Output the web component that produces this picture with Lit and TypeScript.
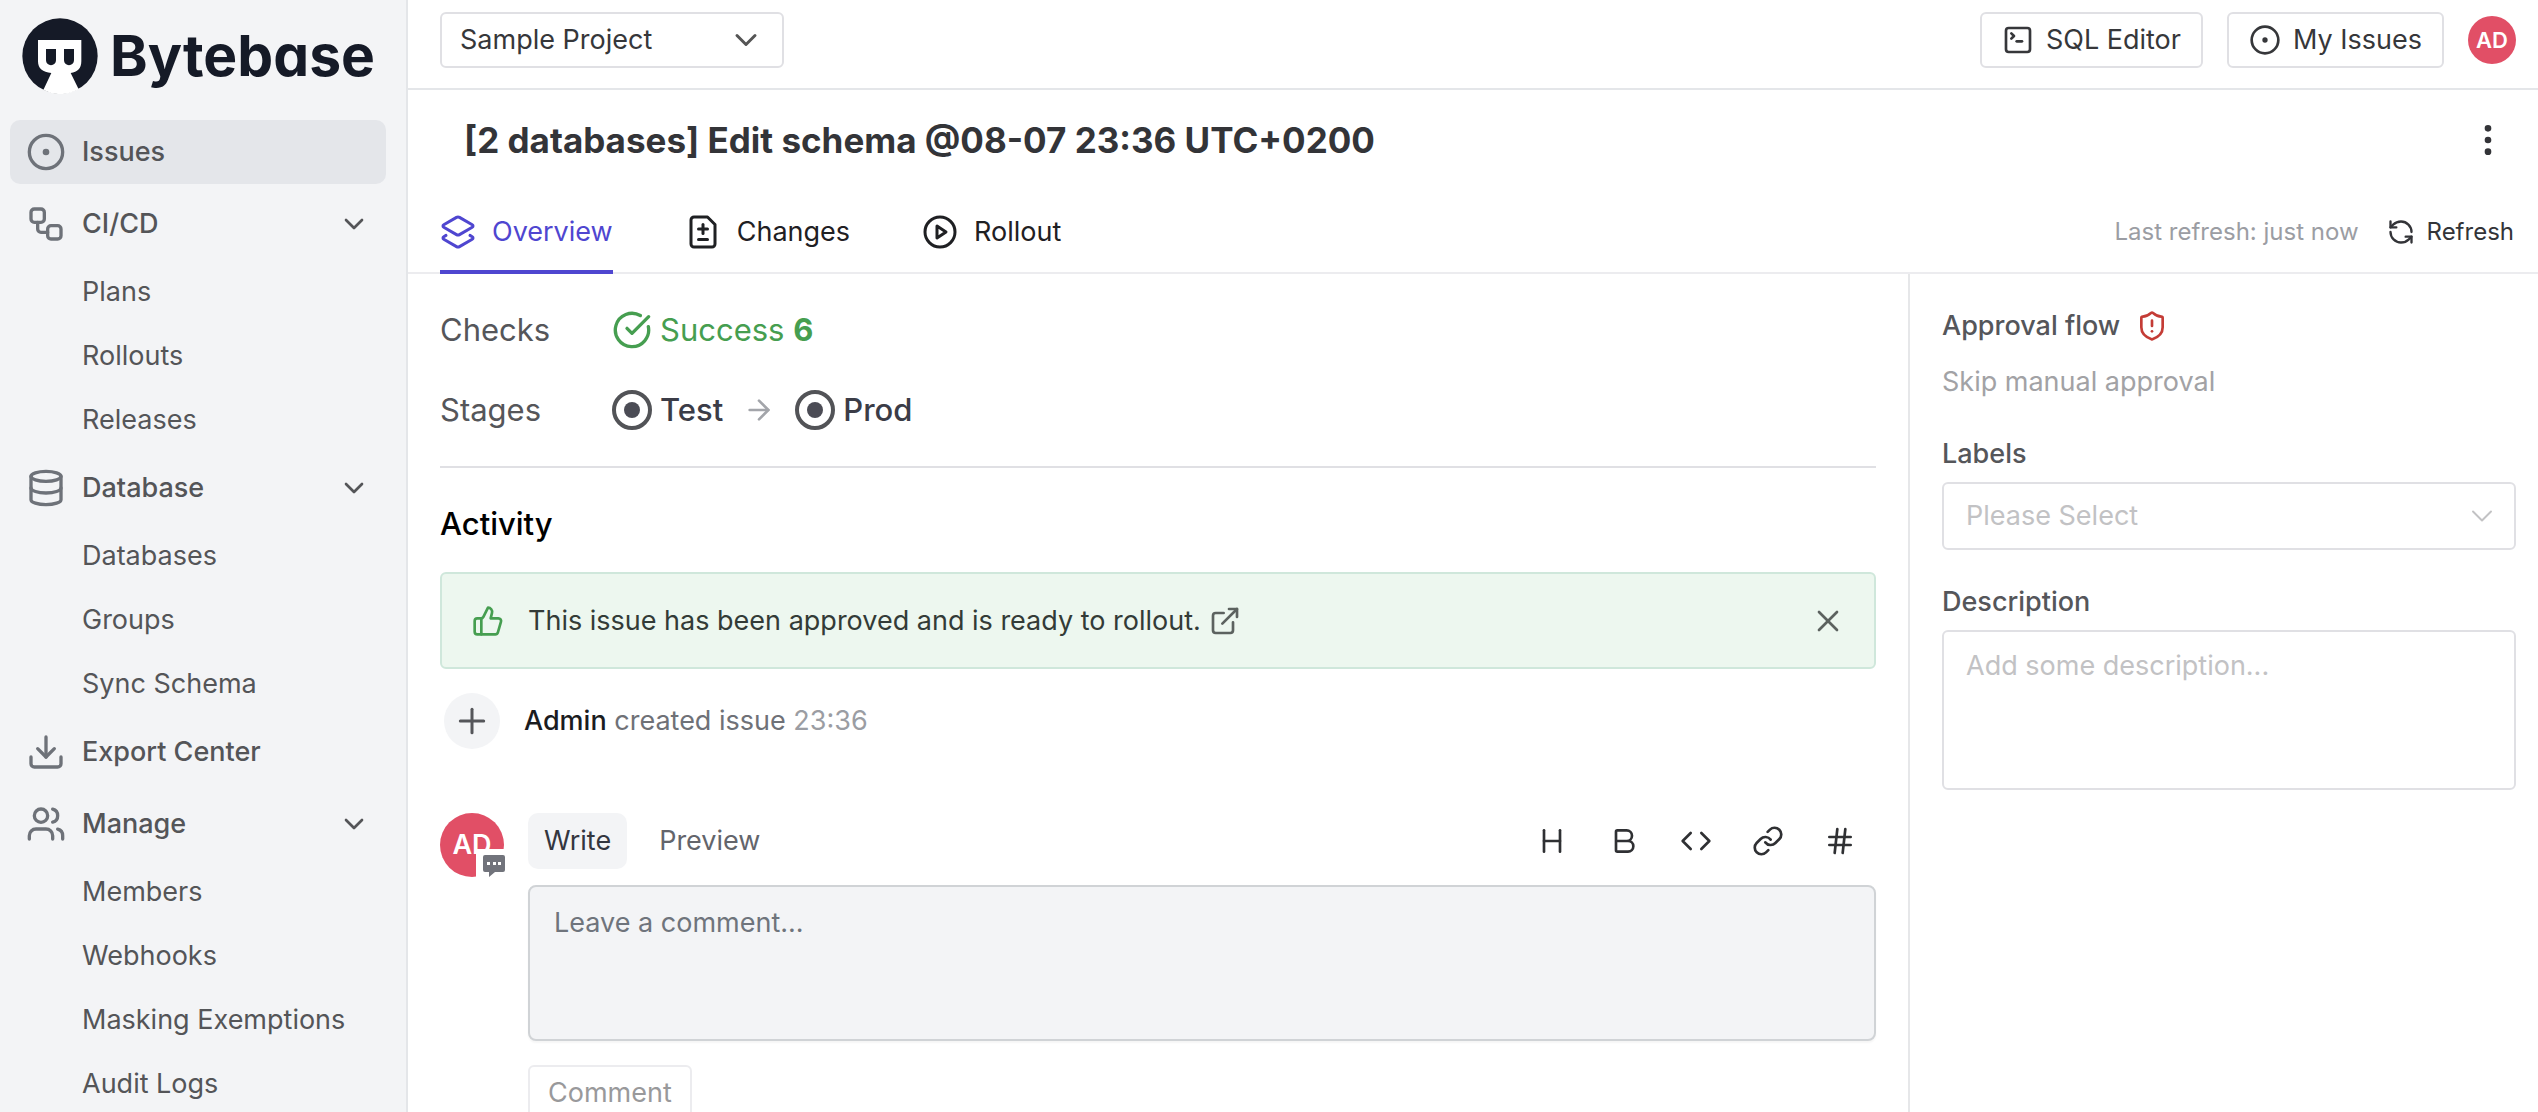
import { LitElement, html, svg, css, type TemplateResult } from "lit";
import { customElement, property } from "lit/decorators.js";
import { classMap } from "lit/directives/class-map.js";

/* 24-unit stroke icons, keyed by name */
const ICONS: Record<string, TemplateResult> = {
  issue: svg`<circle cx="12" cy="12" r="10"/><circle cx="12" cy="12" r="1"/>`,
  workflow: svg`<rect width="8" height="8" x="3" y="3" rx="2"/><path d="M7 11v4a2 2 0 0 0 2 2h4"/><rect width="8" height="8" x="13" y="13" rx="2"/>`,
  database: svg`<ellipse cx="12" cy="5" rx="9" ry="3"/><path d="M3 5v14a9 3 0 0 0 18 0V5"/><path d="M3 12a9 3 0 0 0 18 0"/>`,
  download: svg`<path d="M21 15v4a2 2 0 0 1-2 2H5a2 2 0 0 1-2-2v-4"/><path d="m7 10 5 5 5-5"/><path d="M12 15V3"/>`,
  users: svg`<path d="M16 21v-2a4 4 0 0 0-4-4H6a4 4 0 0 0-4 4v2"/><circle cx="9" cy="7" r="4"/><path d="M22 21v-2a4 4 0 0 0-3-3.87"/><path d="M16 3.13a4 4 0 0 1 0 7.75"/>`,
  chevron: svg`<path d="m6 9 6 6 6-6"/>`,
  terminal: svg`<rect width="18" height="18" x="3" y="3" rx="2"/><path d="m7 11 2-2-2-2"/><path d="M11 13h4"/>`,
  kebab: svg`<circle cx="12" cy="12" r="1"/><circle cx="12" cy="5" r="1"/><circle cx="12" cy="19" r="1"/>`,
  layers: svg`<path d="M13 13.74a2 2 0 0 1-2 0L2.5 8.87a1 1 0 0 1 0-1.74L11 2.26a2 2 0 0 1 2 0l8.5 4.87a1 1 0 0 1 0 1.74z"/><path d="m20 14.285 1.5.845a1 1 0 0 1 0 1.74L13 21.74a2 2 0 0 1-2 0l-8.5-4.87a1 1 0 0 1 0-1.74l1.5-.845"/>`,
  fileDiff: svg`<path d="M15 2H6a2 2 0 0 0-2 2v16a2 2 0 0 0 2 2h12a2 2 0 0 0 2-2V7Z"/><path d="M9 10h6"/><path d="M12 13V7"/><path d="M9 17h6"/>`,
  play: svg`<circle cx="12" cy="12" r="10"/><path d="m10 8 6 4-6 4z"/>`,
  refresh: svg`<path d="M21 12a9 9 0 0 0-9-9 9.75 9.75 0 0 0-6.74 2.74L3 8"/><path d="M3 3v5h5"/><path d="M3 12a9 9 0 0 0 9 9 9.75 9.75 0 0 0 6.74-2.74L21 16"/><path d="M16 16h5v5"/>`,
  checkCircle: svg`<path d="M21.801 10A10 10 0 1 1 17 3.335"/><path d="m9 11 3 3L22 4"/>`,
  arrow: svg`<path d="M5 12h14"/><path d="m12 5 7 7-7 7"/>`,
  thumb: svg`<path d="M7 10v12"/><path d="M15 5.88 14 10h5.83a2 2 0 0 1 1.92 2.56l-2.33 8A2 2 0 0 1 17.5 22H4a2 2 0 0 1-2-2v-8a2 2 0 0 1 2-2h2.76a2 2 0 0 0 1.79-1.11L12 2a3.13 3.13 0 0 1 3 3.88Z"/>`,
  external: svg`<path d="M15 3h6v6"/><path d="M10 14 21 3"/><path d="M18 13v6a2 2 0 0 1-2 2H5a2 2 0 0 1-2-2V8a2 2 0 0 1 2-2h6"/>`,
  close: svg`<path d="M18 6 6 18"/><path d="m6 6 12 12"/>`,
  plus: svg`<path d="M5 12h14"/><path d="M12 5v14"/>`,
  heading: svg`<path d="M6 12h12"/><path d="M6 20V4"/><path d="M18 20V4"/>`,
  bold: svg`<path d="M6 12h9a4 4 0 0 1 0 8H7a1 1 0 0 1-1-1V5a1 1 0 0 1 1-1h7a4 4 0 0 1 0 8"/>`,
  code: svg`<path d="m16 18 6-6-6-6"/><path d="m8 6-6 6 6 6"/>`,
  link: svg`<path d="M10 13a5 5 0 0 0 7.54.54l3-3a5 5 0 0 0-7.07-7.07l-1.72 1.71"/><path d="M14 11a5 5 0 0 0-7.54-.54l-3 3a5 5 0 0 0 7.07 7.07l1.71-1.71"/>`,
  hash: svg`<path d="M4 9h16"/><path d="M4 15h16"/><path d="M10 3 8 21"/><path d="M16 3l-2 18"/>`,
  shield: svg`<path d="M20 13c0 5-3.5 7.5-7.66 8.95a1 1 0 0 1-.67-.01C7.5 20.5 4 18 4 13V6a1 1 0 0 1 1-1c2 0 4.5-1.2 6.24-2.72a1.17 1.17 0 0 1 1.52 0C14.51 3.81 17 5 19 5a1 1 0 0 1 1 1z"/><path d="M12 8v4"/><path d="M12 16h.01"/>`,
};

const icon = (name: string, size = 32, weight = 2) => html`<svg
  class="icon"
  width=${size}
  height=${size}
  viewBox="0 0 24 24"
  fill="none"
  stroke="currentColor"
  stroke-width=${weight}
  stroke-linecap="round"
  stroke-linejoin="round"
  aria-hidden="true"
>${ICONS[name]}</svg>`;

const base = css`
  *,
  *::before,
  *::after {
    box-sizing: border-box;
  }
  :host {
    font-family: Inter, "Liberation Sans", sans-serif;
    font-size: 27px;
    line-height: 40px;
  }
  .icon {
    display: block;
    flex: none;
  }
  button,
  select,
  textarea {
    font: inherit;
    color: inherit;
    margin: 0;
  }
  button {
    display: flex;
    align-items: center;
    padding: 0;
    border: 0;
    background: none;
    cursor: pointer;
  }
  a {
    color: inherit;
    text-decoration: none;
  }
  h1,
  h2,
  p,
  ul {
    margin: 0;
    padding: 0;
  }
  textarea {
    display: block;
    width: 100%;
    resize: none;
    overflow: hidden;
  }
  .picker {
    display: grid;
    align-items: center;
  }
  .picker > * {
    grid-area: 1 / 1;
  }
  .picker select {
    appearance: none;
    width: 100%;
    background: #fff;
    border: 2px solid #e0e0e4;
    border-radius: 6px;
  }
  .picker .icon {
    justify-self: end;
    pointer-events: none;
  }
  .avatar {
    display: flex;
    align-items: center;
    justify-content: center;
    flex: none;
    border-radius: 50%;
    background: #e14f66;
    color: #fff;
    font-weight: 600;
  }
`;

interface NavEntry {
  label: string;
  icon: string;
  active?: boolean;
  children?: string[];
}

const NAV: NavEntry[] = [
  { label: "Issues", icon: "issue", active: true },
  { label: "CI/CD", icon: "workflow", children: ["Plans", "Rollouts", "Releases"] },
  { label: "Database", icon: "database", children: ["Databases", "Groups", "Sync Schema"] },
  { label: "Export Center", icon: "download" },
  { label: "Manage", icon: "users", children: ["Members", "Webhooks", "Masking Exemptions", "Audit Logs"] },
];

@customElement("side-nav")
class SideNav extends LitElement {
  static styles = [
    base,
    css`
      :host {
        display: block;
        padding: 0 20px 0 10px;
        background: #f3f4f6;
        border-right: 2px solid #e4e6e9;
        color: #545558;
        overflow: hidden;
      }
      .brand {
        display: flex;
        align-items: center;
        gap: 12px;
        height: 116px;
        padding: 0 0 4px 12px;
        color: #151a27;
      }
      .name {
        font-size: 57px;
        line-height: 64px;
        font-weight: 700;
        font-feature-settings: "cv11";
      }
      .item {
        display: flex;
        align-items: center;
        gap: 16px;
        width: 100%;
        height: 64px;
        margin: 4px 0;
        padding: 0 16px;
        border-radius: 10px;
        font-weight: 500;
        text-align: left;
      }
      .item > .icon:first-child {
        color: #6e7279;
      }
      .active {
        background: #e4e6ea;
      }
      .label {
        flex: 1;
      }
      nav,
      .list {
        display: flex;
        flex-direction: column;
        list-style: none;
      }
      .child {
        display: block;
        padding: 12px 0 12px 72px;
        white-space: nowrap;
      }
    `,
  ];

  private entry(e: NavEntry) {
    if (!e.children) {
      return html`<a
        href="#"
        class=${classMap({ item: true, active: !!e.active })}
        >${icon(e.icon, 40)}<span class="label">${e.label}</span></a
      >`;
    }
    return html`
      <button class="item" aria-expanded="true">
        ${icon(e.icon, 40)}<span class="label">${e.label}</span>${icon("chevron", 32)}
      </button>
      <ul class="list">
        ${e.children.map((c) => html`<li><a class="child" href="#">${c}</a></li>`)}
      </ul>
    `;
  }

  render() {
    return html`
      <a class="brand" href="#">
        <svg class="icon" width="76" height="76" viewBox="0 0 228 228" aria-hidden="true">
          <circle cx="114" cy="114" r="113" fill="#151a27" />
          <path
            fill="#fff"
            d="M48 66H178V130C178 152 166 163 146 165L170 214A113 113 0 0 1 64 216L88 165C62 163 48 152 48 130Z"
          />
          <path
            fill="#151a27"
            d="M72 93h30v34a15 15 0 0 1-30 0zM126 93h30v34a15 15 0 0 1-30 0z"
          />
        </svg>
        <span class="name">Bytebase</span>
      </a>
      <nav>${NAV.map((e) => this.entry(e))}</nav>
    `;
  }
}

@customElement("top-bar")
class TopBar extends LitElement {
  static styles = [
    base,
    css`
      :host {
        display: flex;
        align-items: center;
        gap: 24px;
        height: 90px;
        padding: 0 22px 8px 32px;
        border-bottom: 2px solid #e4e6e9;
        color: #36373a;
      }
      .picker {
        width: 344px;
        margin-right: auto;
      }
      .picker select {
        height: 56px;
        padding: 0 56px 0 18px;
      }
      .picker .icon {
        margin-right: 20px;
        color: #555;
      }
      .action {
        height: 56px;
        gap: 12px;
        padding: 0 20px;
        border: 2px solid #e0e0e4;
        border-radius: 6px;
      }
      .avatar {
        width: 48px;
        height: 48px;
        font-size: 22px;
      }
    `,
  ];

  render() {
    return html`
      <div class="picker">
        <select aria-label="Project">
          <option>Sample Project</option>
        </select>
        ${icon("chevron", 36)}
      </div>
      <button class="action">${icon("terminal")}SQL Editor</button>
      <button class="action">${icon("issue")}My Issues</button>
      <button class="avatar" aria-label="Account">AD</button>
    `;
  }
}

@customElement("issue-header")
class IssueHeader extends LitElement {
  static styles = [
    base,
    css`
      :host {
        display: block;
      }
      .title-row {
        display: flex;
        align-items: center;
        justify-content: space-between;
        padding: 28px 30px 28px 56px;
        color: #333438;
      }
      h1 {
        font-size: 35px;
        line-height: 44px;
        font-weight: 700;
      }
      .bar {
        display: flex;
        align-items: center;
        gap: 28px;
        padding: 0 24px 0 32px;
        box-shadow: inset 0 -2px #ececef;
        color: #1f2023;
      }
      .tabs {
        display: flex;
        gap: 72px;
        margin-right: auto;
      }
      .tab {
        display: flex;
        align-items: center;
        gap: 16px;
        padding: 22px 0 18px;
        border-bottom: 4px solid transparent;
      }
      .selected {
        color: #4f46d0;
        border-color: #4f46d0;
      }
      .small {
        font-size: 24px;
      }
      .muted {
        color: #9b9da3;
      }
      .refresh {
        gap: 12px;
        color: #333438;
      }
    `,
  ];

  render() {
    return html`
      <div class="title-row">
        <h1>[2 databases] Edit schema @08-07 23:36 UTC+0200</h1>
        <button aria-label="More actions">${icon("kebab", 40)}</button>
      </div>
      <div class="bar">
        <nav class="tabs">
          <a class="tab selected" href="#">${icon("layers", 36)}Overview</a>
          <a class="tab" href="#">${icon("fileDiff", 36)}Changes</a>
          <a class="tab" href="#">${icon("play", 36)}Rollout</a>
        </nav>
        <span class="small muted">Last refresh: just now</span>
        <button class="small refresh">${icon("refresh", 28)}Refresh</button>
      </div>
    `;
  }
}

@customElement("issue-stage")
class IssueStage extends LitElement {
  @property() name = "";

  static styles = [
    base,
    css`
      :host {
        display: flex;
        align-items: center;
        gap: 8px;
        font-size: 31px;
        font-weight: 500;
        color: #3b3c47;
      }
      .ring {
        display: grid;
        place-items: center;
        width: 40px;
        height: 40px;
        border: 4px solid #525357;
        border-radius: 50%;
      }
      .dot {
        width: 16px;
        height: 16px;
        border-radius: 50%;
        background: #4b4c55;
      }
    `,
  ];

  render() {
    return html`<span class="ring"><span class="dot"></span></span>${this.name}`;
  }
}

@customElement("issue-overview")
class IssueOverview extends LitElement {
  static styles = [
    base,
    css`
      :host {
        display: block;
        padding: 0 32px;
      }
      .summary {
        display: grid;
        grid-template-columns: 172px 1fr;
        row-gap: 40px;
        padding: 36px 0;
        border-bottom: 2px solid #e0e0e4;
        font-size: 31px;
        color: #55565a;
      }
      .value {
        display: flex;
        align-items: center;
        gap: 8px;
      }
      .stages {
        gap: 20px;
      }
      .success {
        color: #469e50;
      }
      .arrow {
        color: #a3a5aa;
      }
      h2 {
        padding: 32px 0 24px;
        font-size: 31px;
        line-height: 48px;
        font-weight: 500;
        color: #000;
      }
      .alert {
        display: flex;
        align-items: center;
        height: 97px;
        padding: 0 28px 0 30px;
        border: 2px solid #cfe7db;
        border-radius: 6px;
        background: #edf7ef;
        color: #333b37;
      }
      .message {
        display: flex;
        align-items: center;
        gap: 8px;
        flex: 1;
        margin-left: 24px;
      }
      .grey {
        color: #5c625f;
      }
      .event {
        display: flex;
        align-items: center;
        gap: 24px;
        padding: 24px 4px 64px;
        color: #6f7177;
      }
      .badge {
        display: grid;
        place-items: center;
        width: 56px;
        height: 56px;
        border-radius: 50%;
        background: #f3f4f6;
        color: #55565a;
      }
      .who {
        font-weight: 500;
        color: #1b1c1f;
      }
      .time {
        color: #9b9da3;
      }
      .composer {
        display: flex;
        align-items: flex-start;
        gap: 24px;
      }
      .author {
        position: relative;
      }
      .author .avatar {
        width: 64px;
        height: 64px;
      }
      .bubble {
        position: absolute;
        right: -4px;
        bottom: -4px;
        padding: 6px 3px 4px 7px;
        background: #fff;
      }
      .editor {
        flex: 1;
      }
      .tools {
        display: flex;
        align-items: center;
        gap: 40px;
        padding: 0 20px 16px 0;
        color: #2f3033;
      }
      .modes {
        display: flex;
        gap: 16px;
        margin-right: auto;
      }
      .mode {
        height: 56px;
        padding: 0 16px;
        border-radius: 10px;
        color: #63656b;
      }
      .current {
        background: #f3f4f6;
        color: #33363f;
      }
      .editor textarea {
        height: 156px;
        padding: 16px 24px;
        border: 2px solid #d0d3d6;
        border-radius: 8px;
        background: #f3f4f6;
        box-shadow: 0 2px 2px #0000000a;
      }
      textarea::placeholder {
        color: #6f747c;
        opacity: 1;
      }
      .submit {
        height: 56px;
        margin-top: 24px;
        padding: 0 18px;
        border: 2px solid #ececef;
        border-radius: 6px;
        color: #99999b;
      }
    `,
  ];

  render() {
    return html`
      <section class="summary">
        <span>Checks</span>
        <span class="value success">${icon("checkCircle", 40)}<span>Success <b>6</b></span></span>
        <span>Stages</span>
        <span class="value stages">
          <issue-stage name="Test"></issue-stage>
          <span class="arrow">${icon("arrow")}</span>
          <issue-stage name="Prod"></issue-stage>
        </span>
      </section>
      <h2>Activity</h2>
      <div class="alert" role="status">
        <span class="success">${icon("thumb")}</span>
        <span class="message">
          This issue has been approved and is ready to rollout.
          <a class="grey" href="#" aria-label="Open rollout">${icon("external")}</a>
        </span>
        <button class="grey" aria-label="Dismiss">${icon("close", 36, 1.8)}</button>
      </div>
      <div class="event">
        <span class="badge">${icon("plus", 40, 1.8)}</span>
        <span><span class="who">Admin</span> created issue <span class="time">23:36</span></span>
      </div>
      <div class="composer">
        <div class="author">
          <span class="avatar">AD</span>
          <span class="bubble">
            <svg class="icon" width="22" height="22" viewBox="0 0 22 22" aria-hidden="true">
              <path fill="#71737b" d="M2 0H20a2 2 0 0 1 2 2V15a2 2 0 0 1-2 2H12L6 22V17H2a2 2 0 0 1-2-2V2a2 2 0 0 1 2-2Z" />
              <path fill="#fff" d="M4 7h3v3H4zM10 7h3v3h-3zM15 7h3v3h-3z" />
            </svg>
          </span>
        </div>
        <div class="editor">
          <div class="tools">
            <div class="modes">
              <button class="mode current">Write</button>
              <button class="mode">Preview</button>
            </div>
            <button aria-label="Heading">${icon("heading")}</button>
            <button aria-label="Bold">${icon("bold")}</button>
            <button aria-label="Code">${icon("code")}</button>
            <button aria-label="Link">${icon("link")}</button>
            <button aria-label="Reference">${icon("hash")}</button>
          </div>
          <textarea aria-label="Comment" placeholder="Leave a comment..."></textarea>
          <button class="submit" disabled>Comment</button>
        </div>
      </div>
    `;
  }
}

@customElement("issue-aside")
class IssueAside extends LitElement {
  static styles = [
    base,
    css`
      :host {
        display: flex;
        flex-direction: column;
        gap: 32px;
        padding: 32px 22px 32px 32px;
        border-left: 2px solid #e6e7e9;
        color: #55565a;
      }
      .field {
        display: flex;
        flex-direction: column;
        gap: 8px;
      }
      .flow {
        gap: 16px;
      }
      .head {
        display: flex;
        align-items: center;
        gap: 16px;
        font-size: 27px;
        font-weight: 500;
      }
      .danger {
        color: #c43c36;
      }
      .skip {
        color: #a2a2a5;
      }
      .picker select {
        height: 68px;
        padding: 0 64px 0 22px;
        color: #c2c2c4;
      }
      .picker .icon {
        margin-right: 16px;
        color: #c2c2c4;
      }
      textarea {
        height: 160px;
        padding: 14px 22px;
        border: 2px solid #e0e0e4;
        border-radius: 6px;
      }
      textarea::placeholder {
        color: #c2c2c4;
        opacity: 1;
      }
    `,
  ];

  render() {
    return html`
      <div class="field flow">
        <h2 class="head">Approval flow <span class="danger">${icon("shield")}</span></h2>
        <p class="skip">Skip manual approval</p>
      </div>
      <div class="field">
        <label class="head" for="labels">Labels</label>
        <div class="picker">
          <select id="labels">
            <option>Please Select</option>
          </select>
          ${icon("chevron", 36, 1.3)}
        </div>
      </div>
      <div class="field">
        <label class="head" for="description">Description</label>
        <textarea id="description" placeholder="Add some description..."></textarea>
      </div>
    `;
  }
}

@customElement("app-root")
class AppRoot extends LitElement {
  static styles = [
    base,
    css`
      :host {
        display: grid;
        grid-template-columns: 408px minmax(0, 1fr);
        height: 100vh;
        overflow: hidden;
        background: #fff;
      }
      .page {
        display: flex;
        flex-direction: column;
        min-height: 0;
      }
      .body {
        display: grid;
        grid-template-columns: minmax(0, 1fr) 630px;
        flex: 1;
        min-height: 0;
      }
      issue-overview {
        min-height: 0;
        overflow: hidden;
      }
    `,
  ];

  render() {
    return html`
      <side-nav></side-nav>
      <div class="page">
        <top-bar></top-bar>
        <issue-header></issue-header>
        <main class="body">
          <issue-overview></issue-overview>
          <issue-aside></issue-aside>
        </main>
      </div>
    `;
  }
}
